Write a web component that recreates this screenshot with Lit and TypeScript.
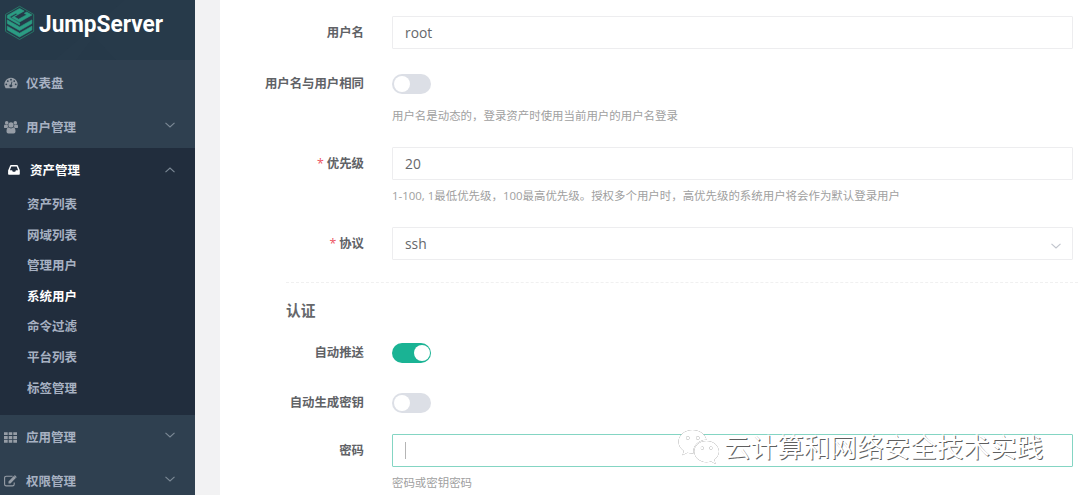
import { LitElement, html, svg, css, nothing } from "lit";
import { customElement } from "lit/decorators.js";
import { classMap } from "lit/directives/class-map.js";

const chevron = svg`<path d="M0.5 0.8 L5 5 L9.5 0.8" fill="none" stroke="currentColor" stroke-width="1.1"/>`;

const icons = {
  dashboard: html`<svg class="icon" width="14" height="12" viewBox="0 0 14 12"><path fill="currentColor" fill-rule="evenodd" d="M7 .7a6.6 6.6 0 0 1 5.5 10.2q-.2.3-.5.3H2q-.3 0-.5-.3A6.6 6.6 0 0 1 7 .7ZM2.3 6.4a.9.9 0 1 0 0 1.8.9.9 0 0 0 0-1.8ZM3.8 3.2a.9.9 0 1 0 0 1.8.9.9 0 0 0 0-1.8ZM7 1.8a.9.9 0 1 0 0 1.8.9.9 0 0 0 0-1.8ZM10.2 3.2a.9.9 0 1 0 0 1.8.9.9 0 0 0 0-1.8ZM11.7 6.4a.9.9 0 1 0 0 1.8.9.9 0 0 0 0-1.8ZM7.6 4.5 6.9 7.4a1.4 1.4 0 1 0 .8.3l.7-3Z"/></svg>`,
  users: html`<svg class="icon" width="14" height="13" viewBox="0 0 14 13"><g fill="currentColor"><circle cx="2.700" cy="1.900" r="1.800"/><circle cx="11.300" cy="1.900" r="1.800"/><circle cx="7" cy="3.900" r="2.600"/><path d="M0 5.2Q0 3.500 1 3.500q1.500.9 2.800.4Q3.600 5.200 4.300 6.200 3.400 6.300 2.700 7.100H1.200Q0 7.100 0 6.200ZM14 5.200Q14 3.500 13 3.500q-1.500.9-2.800.4Q10.400 5.200 9.700 6.200q.9.1 1.600.9h1.500Q14 7.100 14 6.200ZM4.500 6.600q2.500 1.600 5 0 2 .1 2 3.900 0 2-1.900 2H4.400q-1.900 0-1.900-2 0-3.800 2-3.900Z"/></g></svg>`,
  inbox: html`<svg class="icon" width="12" height="10" viewBox="0 0 12 10"><path fill="currentColor" fill-rule="evenodd" d="M2.200.6Q2.400 0 3 0h6q.6 0 .8.6L11.700 5l.1.600V9q0 .8-.8.8H.9Q.1 9.800.1 9V5.600L.3 5ZM3.300 1.600 1.900 5.200h2.200l.7 1.500h2.400l.7-1.500h2.200L8.700 1.600Z"/></svg>`,
  grid: html`<svg class="icon" width="13" height="11" viewBox="0 0 13 11"><path fill="currentColor" d="M0 .2h3.700v2.900H0ZM4.700.2h3.600v2.900H4.700ZM9.300.2H13v2.900H9.300ZM0 4h3.700v2.900H0ZM4.700 4h3.600v2.900H4.700ZM9.300 4H13v2.900H9.300ZM0 7.800h3.700v2.900H0ZM4.700 7.800h3.600v2.900H4.700ZM9.300 7.800H13v2.900H9.300Z"/></svg>`,
  edit: html`<svg class="icon" width="13" height="12" viewBox="0 0 13 12"><path d="M8.600 1.300H2.300Q.6 1.300.6 3v6.200q0 1.700 1.700 1.700h6.200q1.700 0 1.700-1.700V7.400" fill="none" stroke="currentColor" stroke-width="1.100"/><path fill="currentColor" d="M4.500 6.400 9.800 1.100l2 2-5.300 5.300h-2ZM10.300.6q.5-.5 1 0l1.100 1.100q.4.4 0 .9l-.3.3-2-2Z"/></svg>`,
};

@customElement("nav-item")
class NavItem extends LitElement {
  static properties = { label: {}, icon: {}, arrow: {}, active: { type: Boolean } };
  static styles = css`
    :host { display: block; height: 44px; }
    .item { display: flex; align-items: center; height: 44px; padding: 0 20px 0 4px; box-sizing: border-box; color: #a7b1c2; font-size: 12.5px; font-weight: 700; }
    .ico { display: flex; width: 22px; color: #969da6; }
    .active { color: #fff; padding-left: 8px; }
    .active .ico { color: #fff; }
    .label { flex: 1; line-height: 44px; padding-top: 1px; }
    .arrow { display: block; color: #7c8996; margin-top: -4px; }
    .up { transform: rotate(180deg); margin-top: -1px; }
  `;
  declare label: string; declare icon: keyof typeof icons; declare arrow: string; declare active: boolean;
  render() {
    return html`<div class=${classMap({ item: true, active: this.active })}>
      <span class="ico">${icons[this.icon]}</span><span class="label">${this.label}</span>
      ${this.arrow ? html`<svg class=${classMap({ arrow: true, up: this.arrow === "up" })} width="10" height="6" viewBox="0 0 10 6">${chevron}</svg>` : nothing}
    </div>`;
  }
}

@customElement("toggle-switch")
class ToggleSwitch extends LitElement {
  static properties = { on: { type: Boolean } };
  static styles = css`
    :host { display: block; }
    .track { display: flex; width: 39px; height: 20px; padding: 2px; box-sizing: border-box; border-radius: 10px; background: #dcdfe6; }
    .on { background: #1ab394; justify-content: flex-end; padding-right: 1px; }
    .knob { width: 16px; height: 16px; border-radius: 50%; background: #fff; }
  `;
  declare on: boolean;
  render() {
    return html`<div class=${classMap({ track: true, on: this.on })}><span class="knob"></span></div>`;
  }
}

@customElement("form-row")
class FormRow extends LitElement {
  static properties = { label: {}, required: { type: Boolean }, help: {} };
  static styles = css`
    :host { display: block; }
    .row { display: grid; grid-template-columns: 144px 681px; column-gap: 28px; }
    .label { text-align: right; font-size: 12.4px; font-weight: 700; color: #606266; line-height: 33px; white-space: nowrap; }
    .star { color: #ed5565; font-weight: 400; margin-right: 3px; }
    .control { display: flex; flex-direction: column; justify-content: center; height: 33px; }
    .help { grid-column: 2; font-size: 11.450px; line-height: 32px; height: 30px; color: #a0a0a0; white-space: nowrap; }
  `;
  declare label: string; declare required: boolean; declare help: string;
  render() {
    return html`<div class="row">
      <div class="label">${this.required ? html`<span class="star">*</span>` : nothing}${this.label}</div>
      <div class="control"><slot></slot></div>
      ${this.help ? html`<div class="help">${this.help}</div>` : nothing}
    </div>`;
  }
}

@customElement("app-root")
class AppRoot extends LitElement {
  static styles = css`
    :host { display: block; position: relative; width: 1080px; height: 495px; overflow: hidden; background: #fff; font-family: "Open Sans", "Noto Sans CJK SC", sans-serif; }
    .layout { display: grid; grid-template-columns: 195px 25px 860px; height: 495px; }
    .side { background: #2f4050; overflow: hidden; }
    .gap { background: #f2f2f3; }
    .brand { height: 60px; background: #263949; }
    .brand svg { display: block; }
    .name { font-family: Roboto, sans-serif; font-weight: 700; font-size: 24.5px; }
    .nav { padding-top: 1px; }
    .group { height: 267px; margin-top: -1px; background: #212d3d; }
    .subs { display: grid; grid-auto-rows: 30.6px; margin-top: -2px; padding-left: 27px; }
    .sub { color: #a7b1c2; font-size: 12.5px; font-weight: 700; line-height: 30.6px; }
    .current { color: #fff; }
    .form { display: flex; flex-direction: column; padding-top: 16px; height: 495px; box-sizing: border-box; overflow: hidden; }
    .input { display: flex; align-items: center; justify-content: space-between; height: 33px; box-sizing: border-box; border: 1px solid #ededef; border-radius: 1px; padding: 0 11px 0 12px; font-size: 13.800px; line-height: 18px; color: #66686b; }
    .focus { border-color: #84d5c3; }
    .caret { width: 1px; height: 17px; background: #b5b5b5; }
    .select { display: block; color: #c0c4cc; margin-top: 5px; }
    .r2 { margin-top: 18px; }
    .r3 { margin-top: 17px; }
    .r4 { margin-top: 17px; }
    .r5 { margin-top: 11px; }
    .r6 { margin-top: 17px; }
    .r7 { margin-top: 15px; }
    .divider { margin: 22px 2px 0 66px; border-top: 1px dashed #f0f0f0; height: 0; }
    .title { margin: 12px 0 0 66px; font-size: 14.7px; line-height: 30px; font-weight: 700; color: #65676b; }
    .mark { position: absolute; left: 678px; top: 428px; display: flex; align-items: center; gap: 4px; color: #fff; }
    .mark-icon { display: block; filter: drop-shadow(0.8px 0.8px 0.3px #555); }
    .mark-text { font-size: 26.600px; line-height: 38px; font-weight: 400; white-space: nowrap; text-shadow: 1px 1px 0.5px #5f5f5f; }
  `;
  render() {
    const subs = ["资产列表", "网域列表", "管理用户", "系统用户", "命令过滤", "平台列表", "标签管理"];
    return html`
      <div class="layout">
        <aside class="side">
          <div class="brand">
            <svg width="195" height="60" viewBox="0 0 195 60">
              <path d="M55 60 125 0h70v60H116L94 36 76 60Z" fill="#2a3d4d" opacity=".35"/>
              <path d="M19.600 6.300 33.700 14.400v17L19.600 39.500 5.500 31.400v-17Z" fill="none" stroke="#267566" stroke-width="1"/>
              <g fill="#2b9c83" stroke="#2b9c83" stroke-width=".6">
                <path d="M7.300 15.400 19.600 8.400 24.200 11 14.200 16.700 18.600 19.200 26.700 14.700 24.300 13.300 26.700 12 31.900 15 19.600 22 11.800 17.600 17.500 14.200 16 13.300 9.400 17 19.600 22.900V25L7.300 18Z"/>
                <path d="M7.300 19.900 19.600 26.900 31.900 19.900V23.500L19.600 30.500 7.300 23.500Z"/>
                <path d="M7.300 26.200 19.600 33.200 31.900 26.200V29.900L19.600 37 7.300 29.900Z"/>
              </g>
              <text class="name" x="39" y="31.500" fill="#fff" textLength="124" lengthAdjust="spacingAndGlyphs">JumpServer</text>
            </svg>
          </div>
          <nav class="nav">
            <nav-item label="仪表盘" icon="dashboard"></nav-item>
            <nav-item label="用户管理" icon="users" arrow="down"></nav-item>
            <div class="group">
              <nav-item label="资产管理" icon="inbox" arrow="up" active></nav-item>
              <div class="subs">${subs.map((s) => html`<div class=${classMap({ sub: true, current: s === "系统用户" })}>${s}</div>`)}</div>
            </div>
            <nav-item label="应用管理" icon="grid" arrow="down"></nav-item>
            <nav-item label="权限管理" icon="edit" arrow="down"></nav-item>
          </nav>
        </aside>
        <div class="gap"></div>
        <main class="form">
          <form-row label="用户名"><div class="input">root</div></form-row>
          <form-row class="r2" label="用户名与用户相同" help="用户名是动态的，登录资产时使用当前用户的用户名登录"><toggle-switch></toggle-switch></form-row>
          <form-row class="r3" label="优先级" required help="1-100, 1最低优先级，100最高优先级。授权多个用户时，高优先级的系统用户将会作为默认登录用户"><div class="input">20</div></form-row>
          <form-row class="r4" label="协议" required><div class="input">ssh<svg class="select" width="10" height="6" viewBox="0 0 10 6">${chevron}</svg></div></form-row>
          <div class="divider"></div>
          <div class="title">认证</div>
          <form-row class="r5" label="自动推送"><toggle-switch on></toggle-switch></form-row>
          <form-row class="r6" label="自动生成密钥"><toggle-switch></toggle-switch></form-row>
          <form-row class="r7" label="密码" help="密码或密钥密码"><div class="input focus"><span class="caret"></span></div></form-row>
        </main>
      </div>
      <div class="mark">
        <svg class="mark-icon" width="42" height="37" viewBox="0 0 42 37">
          <path fill="#fff" fill-rule="evenodd" d="M14.500 1C6.500 1 .5 6.200.5 12.800c0 3.800 2 7 5.300 9.200L4.400 26.300l5-2.500q2.600.9 6 .8C14.500 17 20 11 28.500 10.800 27.200 5 21.500 1 14.500 1ZM9.800 7.200a1.700 1.700 0 1 1 0 3.400 1.700 1.700 0 0 1 0-3.400ZM19.800 7.200a1.700 1.700 0 1 1 0 3.400 1.700 1.700 0 0 1 0-3.400Z"/>
          <path fill="#fff" fill-rule="evenodd" d="M28.500 12C21.500 12 16.200 16.800 16.200 22.600s5.300 10.600 12.300 10.600q2.300 0 4.600-.8l4.500 2.500-1.200-4.100c2.700-2 4.600-5 4.600-8.200C41 16.800 35.500 12 28.500 12ZM24.300 17.400a1.500 1.500 0 1 1 0 3 1.500 1.500 0 0 1 0-3ZM32.900 17.400a1.500 1.500 0 1 1 0 3 1.500 1.500 0 0 1 0-3Z"/>
        </svg>
        <span class="mark-text">云计算和网络安全技术实践</span>
      </div>`;
  }
}
